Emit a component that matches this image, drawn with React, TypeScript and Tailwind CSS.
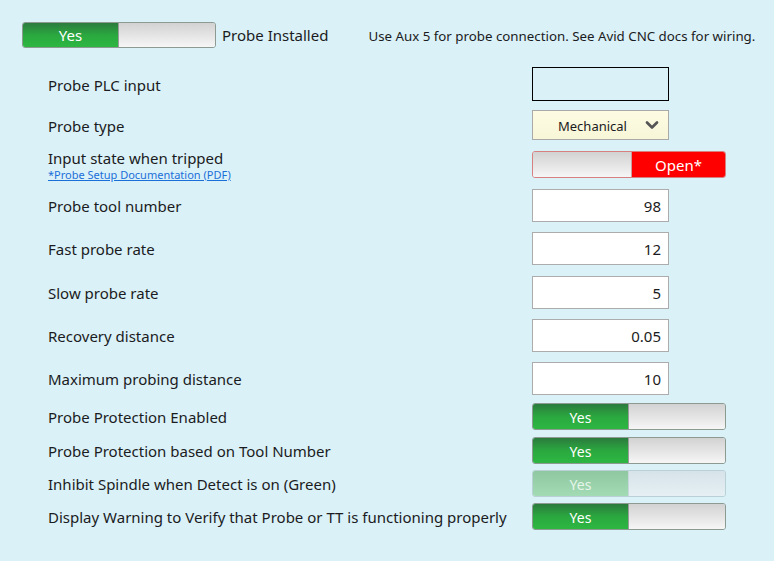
import { ChevronDown } from 'lucide-react';

const FONT = { fontFamily: '"Noto Sans", "Open Sans", sans-serif' };

function YesToggle({ disabled = false }: { disabled?: boolean }) {
  return (
    <div
      className={`flex h-[27px] w-[194px] rounded-[3px] border overflow-hidden ${
        disabled ? 'border-[#b8d0d6]' : 'border-[#8c9a92]'
      }`}
    >
      <div
        className={`w-[95px] flex items-center justify-center text-[14px] pt-[1px] ${
          disabled
            ? 'bg-gradient-to-b from-[#8fc7a0] to-[#a3dcb4] text-[#e6f5ea]'
            : 'bg-gradient-to-b from-[#2a7b3c] via-[#2aa83f] to-[#2db742] text-white'
        }`}
      >
        Yes
      </div>
      <div
        className={`flex-1 border-l ${
          disabled
            ? 'bg-gradient-to-b from-[#d6e3e9] to-[#e6f0f4] border-[#c6d8de]'
            : 'bg-gradient-to-b from-[#d2d2d2] to-[#f6f6f6] border-[#9a9a9a]'
        }`}
      />
    </div>
  );
}

function NumInput({ value }: { value: string }) {
  return (
    <div className="h-[33px] w-[137px] bg-white border border-[#acacac] flex items-center justify-end pr-[7px] pt-[1px] text-[15px] text-[#1b1b22]">
      {value}
    </div>
  );
}

function Row({ label, className, children }: { label: React.ReactNode; className: string; children: React.ReactNode }) {
  return (
    <div className={`flex items-center ${className}`}>
      <div className="w-[532px] shrink-0 whitespace-nowrap pl-[48px] text-[15px] text-[#1b1b22] pt-[2px]">{label}</div>
      {children}
    </div>
  );
}

export default function App() {
  return (
    <div className="w-[774px] h-[561px] bg-[#daf1f8] overflow-hidden" style={FONT}>
      {/* header */}
      <div className="flex items-center pt-[22px] pl-[22px] h-[48px] whitespace-nowrap">
        <div className="flex h-[26px] w-[194px] rounded-[3px] border border-[#8c9a92] overflow-hidden">
          <div className="w-[95px] flex items-center justify-center text-[15px] pt-[1px] text-white bg-gradient-to-b from-[#2a7b3c] via-[#2aa83f] to-[#2db742]">
            Yes
          </div>
          <div className="flex-1 border-l border-[#9a9a9a] bg-gradient-to-b from-[#d2d2d2] to-[#f6f6f6]" />
        </div>
        <span className="ml-[6px] pt-[1px] text-[15px] text-[#1b1b22]">Probe Installed</span>
        <span className="ml-[40px] pt-[3px] text-[13.3px] text-[#1b1b22]">
          Use Aux 5 for probe connection. See Avid CNC docs for wiring.
        </span>
      </div>

      <Row label="Probe PLC input" className="mt-[19px] h-[34px]">
        <div className="h-[34px] w-[137px] border border-black" />
      </Row>

      <Row label="Probe type" className="mt-[9px] h-[30px]">
        <div className="h-[30px] w-[137px] bg-gradient-to-b from-[#fdfce3] to-[#f8f6d8] border border-[#a9a9a9] flex items-center pl-[25px] pr-[6px] text-[13px] text-[#1b1b22]">
          <span className="flex-1 pt-[4px]">Mechanical</span>
          <ChevronDown size={20} strokeWidth={3.2} className="text-[#555]" />
        </div>
      </Row>

      <Row
        label={
          <div className="-mt-[1px]">
            <div className="leading-[19px]">Input state when tripped</div>
            <div className="text-[11px] leading-[14px] text-[#1a6fd8] underline">*Probe Setup Documentation (PDF)</div>
          </div>
        }
        className="mt-[11px] h-[27px]"
      >
        <div className="flex h-[27px] w-[194px] rounded-[3px] border border-[#d88080] overflow-hidden">
          <div className="w-[99px] bg-gradient-to-b from-[#d2d2d2] to-[#f6f6f6] border-r border-[#c8a0a0]" />
          <div className="flex-1 bg-[#ff0000] flex items-center justify-center pt-[1px] text-[15px] text-white">Open*</div>
        </div>
      </Row>

      <Row label="Probe tool number" className="mt-[11px] h-[33px]">
        <NumInput value="98" />
      </Row>
      <Row label="Fast probe rate" className="mt-[10px] h-[33px]">
        <NumInput value="12" />
      </Row>
      <Row label="Slow probe rate" className="mt-[11px] h-[33px]">
        <NumInput value="5" />
      </Row>
      <Row label="Recovery distance" className="mt-[10px] h-[33px]">
        <NumInput value="0.05" />
      </Row>
      <Row label="Maximum probing distance" className="mt-[10px] h-[33px]">
        <NumInput value="10" />
      </Row>

      <Row label="Probe Protection Enabled" className="mt-[8px] h-[27px]">
        <YesToggle />
      </Row>
      <Row label="Probe Protection based on Tool Number" className="mt-[7px] h-[27px]">
        <YesToggle />
      </Row>
      <Row label="Inhibit Spindle when Detect is on (Green)" className="mt-[6px] h-[27px]">
        <YesToggle disabled />
      </Row>
      <Row label="Display Warning to Verify that Probe or TT is functioning properly" className="mt-[6px] h-[27px]">
        <YesToggle />
      </Row>
    </div>
  );
}
